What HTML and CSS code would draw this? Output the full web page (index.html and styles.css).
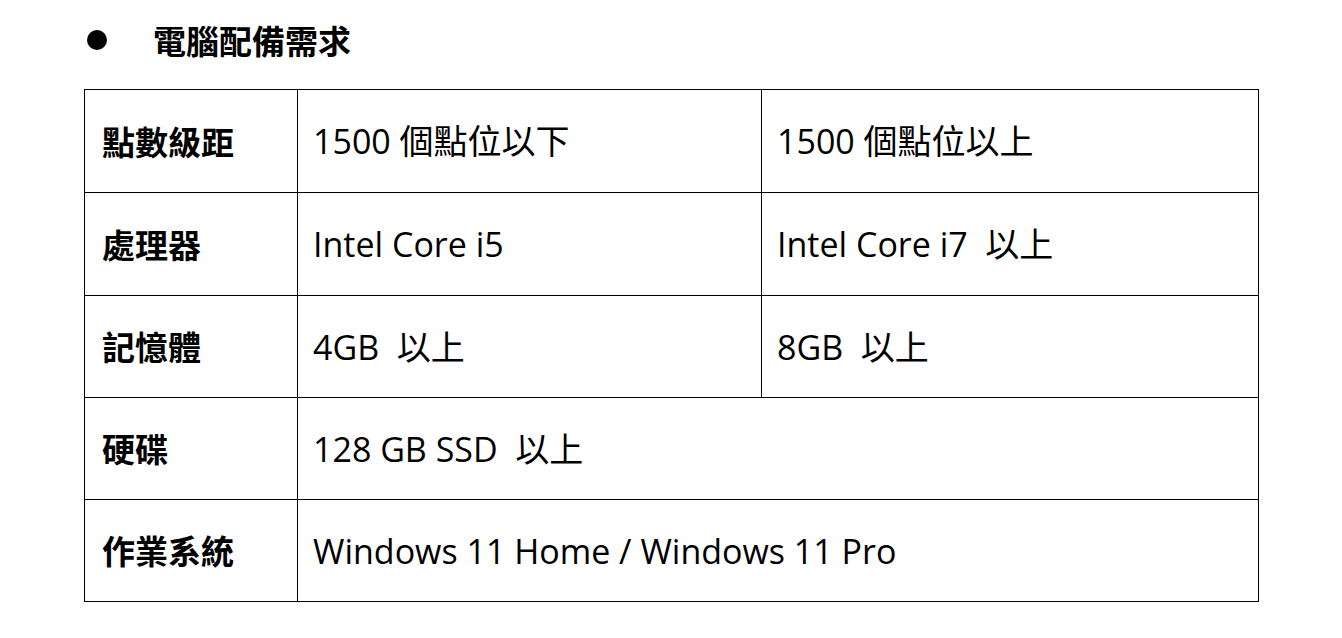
FILE: index.html
```html
<!DOCTYPE html>
<html lang="zh-Hant">
<head>
<meta charset="utf-8">
<link rel="stylesheet" href="styles.css">
</head>
<body>
<div class="page">
  <h2 class="title"><span class="bullet"></span><span>電腦配備需求</span></h2>
  <table class="spec">
    <colgroup><col class="c1"><col class="c2"><col class="c3"></colgroup>
    <tr class="r1"><th>點數級距</th><td>1500 個點位以下</td><td>1500 個點位以上</td></tr>
    <tr class="r2"><th>處理器</th><td>Intel Core i5</td><td>Intel Core i7&nbsp; 以上</td></tr>
    <tr class="r3"><th>記憶體</th><td>4GB&nbsp; 以上</td><td>8GB&nbsp; 以上</td></tr>
    <tr class="r4"><th>硬碟</th><td colspan="2">128 GB SSD&nbsp; 以上</td></tr>
    <tr class="r5"><th>作業系統</th><td colspan="2">Windows 11 Home / Windows 11 Pro</td></tr>
  </table>
</div>
</body>
</html>
```
FILE: styles.css
```css
html, body {
  margin: 0;
  padding: 0;
  background: #fff;
}
body {
  font-family: "Open Sans", "Noto Sans CJK TC", sans-serif;
  color: #000;
}
.page {
  padding: 20px 0 0 84px;
}
.title {
  display: flex;
  align-items: center;
  margin: 0 0 29px 0;
  height: 40px;
  font-size: 33px;
  font-weight: 700;
  font-family: "Noto Sans CJK TC", sans-serif;
}
.bullet {
  width: 20px;
  height: 20px;
  border-radius: 50%;
  background: #000;
  margin: 0 46px 0 3px;
}
.spec {
  border-collapse: collapse;
  table-layout: fixed;
  width: 1174px;
}
.c1 { width: 213px; }
.c2 { width: 464px; }
.c3 { width: 497px; }
.spec th, .spec td {
  border: 1px solid #000;
  height: 101px;
  padding: 0 0 0 15px;
  text-align: left;
  vertical-align: middle;
  font-size: 34px;
  line-height: 1;
  white-space: nowrap;
}
.spec .r1 th, .spec .r1 td,
.spec .r2 th, .spec .r2 td {
  height: 102px;
}
.spec th {
  padding-left: 17px;
  font-size: 33px;
  font-weight: 700;
  font-family: "Noto Sans CJK TC", sans-serif;
}
.spec td {
  font-weight: 400;
}
```
